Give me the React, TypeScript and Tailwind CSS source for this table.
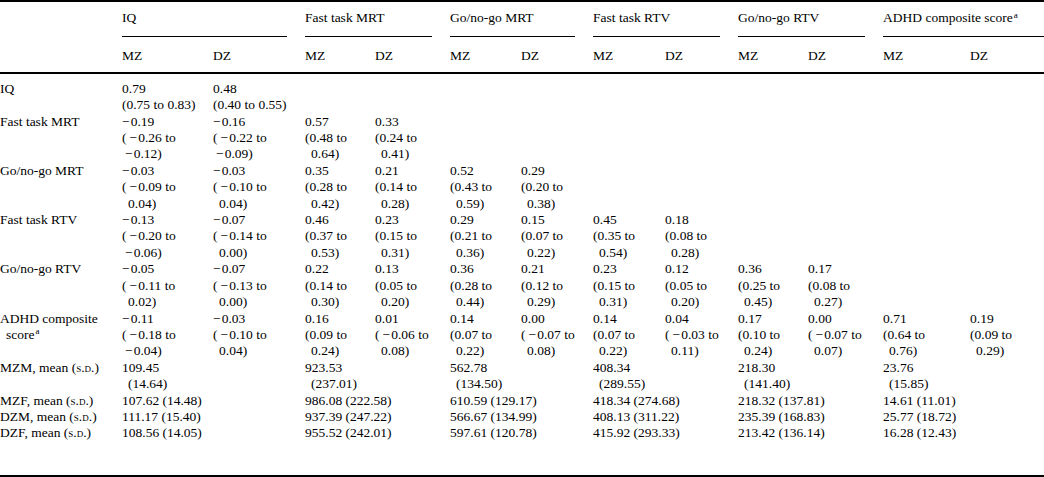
import React from 'react';

type Cell = string[] | null;

const groups = ['IQ', 'Fast task MRT', 'Go/no-go MRT', 'Fast task RTV', 'Go/no-go RTV', 'ADHD composite score'];

const corrRows: { label: string | null; cells: Cell[] }[] = [
  {
    label: 'IQ',
    cells: [
      ['0.79', '(0.75 to 0.83)'],
      ['0.48', '(0.40 to 0.55)'],
    ],
  },
  {
    label: 'Fast task MRT',
    cells: [
      ['−0.19', '( −0.26 to', '−0.12)'],
      ['−0.16', '( −0.22 to', '−0.09)'],
      ['0.57', '(0.48 to', '0.64)'],
      ['0.33', '(0.24 to', '0.41)'],
    ],
  },
  {
    label: 'Go/no-go MRT',
    cells: [
      ['−0.03', '( −0.09 to', '0.04)'],
      ['−0.03', '( −0.10 to', '0.04)'],
      ['0.35', '(0.28 to', '0.42)'],
      ['0.21', '(0.14 to', '0.28)'],
      ['0.52', '(0.43 to', '0.59)'],
      ['0.29', '(0.20 to', '0.38)'],
    ],
  },
  {
    label: 'Fast task RTV',
    cells: [
      ['−0.13', '( −0.20 to', '−0.06)'],
      ['−0.07', '( −0.14 to', '0.00)'],
      ['0.46', '(0.37 to', '0.53)'],
      ['0.23', '(0.15 to', '0.31)'],
      ['0.29', '(0.21 to', '0.36)'],
      ['0.15', '(0.07 to', '0.22)'],
      ['0.45', '(0.35 to', '0.54)'],
      ['0.18', '(0.08 to', '0.28)'],
    ],
  },
  {
    label: 'Go/no-go RTV',
    cells: [
      ['−0.05', '( −0.11 to', '0.02)'],
      ['−0.07', '( −0.13 to', '0.00)'],
      ['0.22', '(0.14 to', '0.30)'],
      ['0.13', '(0.05 to', '0.20)'],
      ['0.36', '(0.28 to', '0.44)'],
      ['0.21', '(0.12 to', '0.29)'],
      ['0.23', '(0.15 to', '0.31)'],
      ['0.12', '(0.05 to', '0.20)'],
      ['0.36', '(0.25 to', '0.45)'],
      ['0.17', '(0.08 to', '0.27)'],
    ],
  },
  {
    label: null,
    cells: [
      ['−0.11', '( −0.18 to', '−0.04)'],
      ['−0.03', '( −0.10 to', '0.04)'],
      ['0.16', '(0.09 to', '0.24)'],
      ['0.01', '( −0.06 to', '0.08)'],
      ['0.14', '(0.07 to', '0.22)'],
      ['0.00', '( −0.07 to', '0.08)'],
      ['0.14', '(0.07 to', '0.22)'],
      ['0.04', '( −0.03 to', '0.11)'],
      ['0.17', '(0.10 to', '0.24)'],
      ['0.00', '( −0.07 to', '0.07)'],
      ['0.71', '(0.64 to', '0.76)'],
      ['0.19', '(0.09 to', '0.29)'],
    ],
  },
];

const meanRows: { label: string; values: string[][] }[] = [
  {
    label: 'MZM',
    values: [
      ['109.45', '(14.64)'],
      ['923.53', '(237.01)'],
      ['562.78', '(134.50)'],
      ['408.34', '(289.55)'],
      ['218.30', '(141.40)'],
      ['23.76', '(15.85)'],
    ],
  },
  {
    label: 'MZF',
    values: [['107.62 (14.48)'], ['986.08 (222.58)'], ['610.59 (129.17)'], ['418.34 (274.68)'], ['218.32 (137.81)'], ['14.61 (11.01)']],
  },
  {
    label: 'DZM',
    values: [['111.17 (15.40)'], ['937.39 (247.22)'], ['566.67 (134.99)'], ['408.13 (311.22)'], ['235.39 (168.83)'], ['25.77 (18.72)']],
  },
  {
    label: 'DZF',
    values: [['108.56 (14.05)'], ['955.52 (242.01)'], ['597.61 (120.78)'], ['415.92 (293.33)'], ['213.42 (136.14)'], ['16.28 (12.43)']],
  },
];

const colWidths = [122, 91, 92, 70, 75, 71, 72, 72, 73, 70, 75, 87, 74];

// minus signs get a bit of air, like the typeset original
const fmt = (s: string) =>
  s.split(/(−| )/).map((part, i) => {
    if (part === '−') return <span key={i} className="mr-[1px]">−</span>;
    if (part === ' ' && s.startsWith('( ') && i === 1) return <span key={i} className="inline-block w-[3px]" />;
    return part;
  });

// wrapped line: hangs a little to the right of the cell start
const Lines = ({ lines, wrapFrom }: { lines: string[]; wrapFrom: number }) => (
  <>
    {lines.map((l, i) => (
      <div key={i} className={i < wrapFrom ? '' : l.startsWith('−') ? 'pl-[3px]' : 'pl-[6px]'}>
        {fmt(l)}
      </div>
    ))}
  </>
);

const SD = () => <span className="[font-variant:small-caps]">s.d.</span>;

const App = () => {
  const last = meanRows.length - 1;
  return (
    <div className="w-[1044px] h-[477px] bg-white text-black font-['Liberation_Serif',serif] text-[13.5px] leading-[16.4px]">
      <table className="w-[1044px] table-fixed border-collapse border-t-2 border-b-2 border-black">
        <colgroup>
          {colWidths.map((w, i) => (
            <col key={i} style={{ width: w }} />
          ))}
        </colgroup>
        <thead>
          <tr>
            <th rowSpan={2} className="p-0 border-b-2 border-black" />
            {groups.map((g, i) => (
              <th key={g} colSpan={2} className="p-0 text-left font-normal align-top">
                <div className={`border-b border-black pt-[8px] pb-[10px] ${i === groups.length - 1 ? '' : 'mr-[18px]'}`}>
                  {g}
                  {i === groups.length - 1 && <sup className="text-[9px] ml-[1px]">a</sup>}
                </div>
              </th>
            ))}
          </tr>
          <tr className="border-b-2 border-black">
            {groups.map((g) => (
              <React.Fragment key={g}>
                <th className="p-0 pt-[11px] pb-[7px] text-left font-normal">MZ</th>
                <th className="p-0 pt-[11px] pb-[7px] text-left font-normal">DZ</th>
              </React.Fragment>
            ))}
          </tr>
        </thead>
        <tbody>
          {corrRows.map((row, r) => (
            <tr key={r} className="align-top">
              <td className={`p-0 whitespace-nowrap ${r === 0 ? 'pt-[7px]' : ''}`}>
                {row.label ?? (
                  <>
                    <div>ADHD composite</div>
                    <div className="pl-[6px]">
                      score<sup className="text-[9px] ml-[1px]">a</sup>
                    </div>
                  </>
                )}
              </td>
              {Array.from({ length: 12 }).map((_, c) => {
                const cell = row.cells[c];
                return (
                  <td key={c} className={`p-0 whitespace-nowrap ${r === 0 ? 'pt-[7px]' : ''}`}>
                    {cell && <Lines lines={cell} wrapFrom={2} />}
                  </td>
                );
              })}
            </tr>
          ))}
          {meanRows.map((row, r) => (
            <tr key={row.label} className="align-top">
              <td className={`p-0 whitespace-nowrap ${r === last ? 'pb-[33px]' : ''}`}>
                {row.label}, mean (<SD />)
              </td>
              {row.values.map((v, c) => (
                <td key={c} colSpan={2} className={`p-0 whitespace-nowrap ${r === last ? 'pb-[33px]' : ''}`}>
                  <Lines lines={v} wrapFrom={1} />
                </td>
              ))}
            </tr>
          ))}
        </tbody>
      </table>
    </div>
  );
};

export default App;
